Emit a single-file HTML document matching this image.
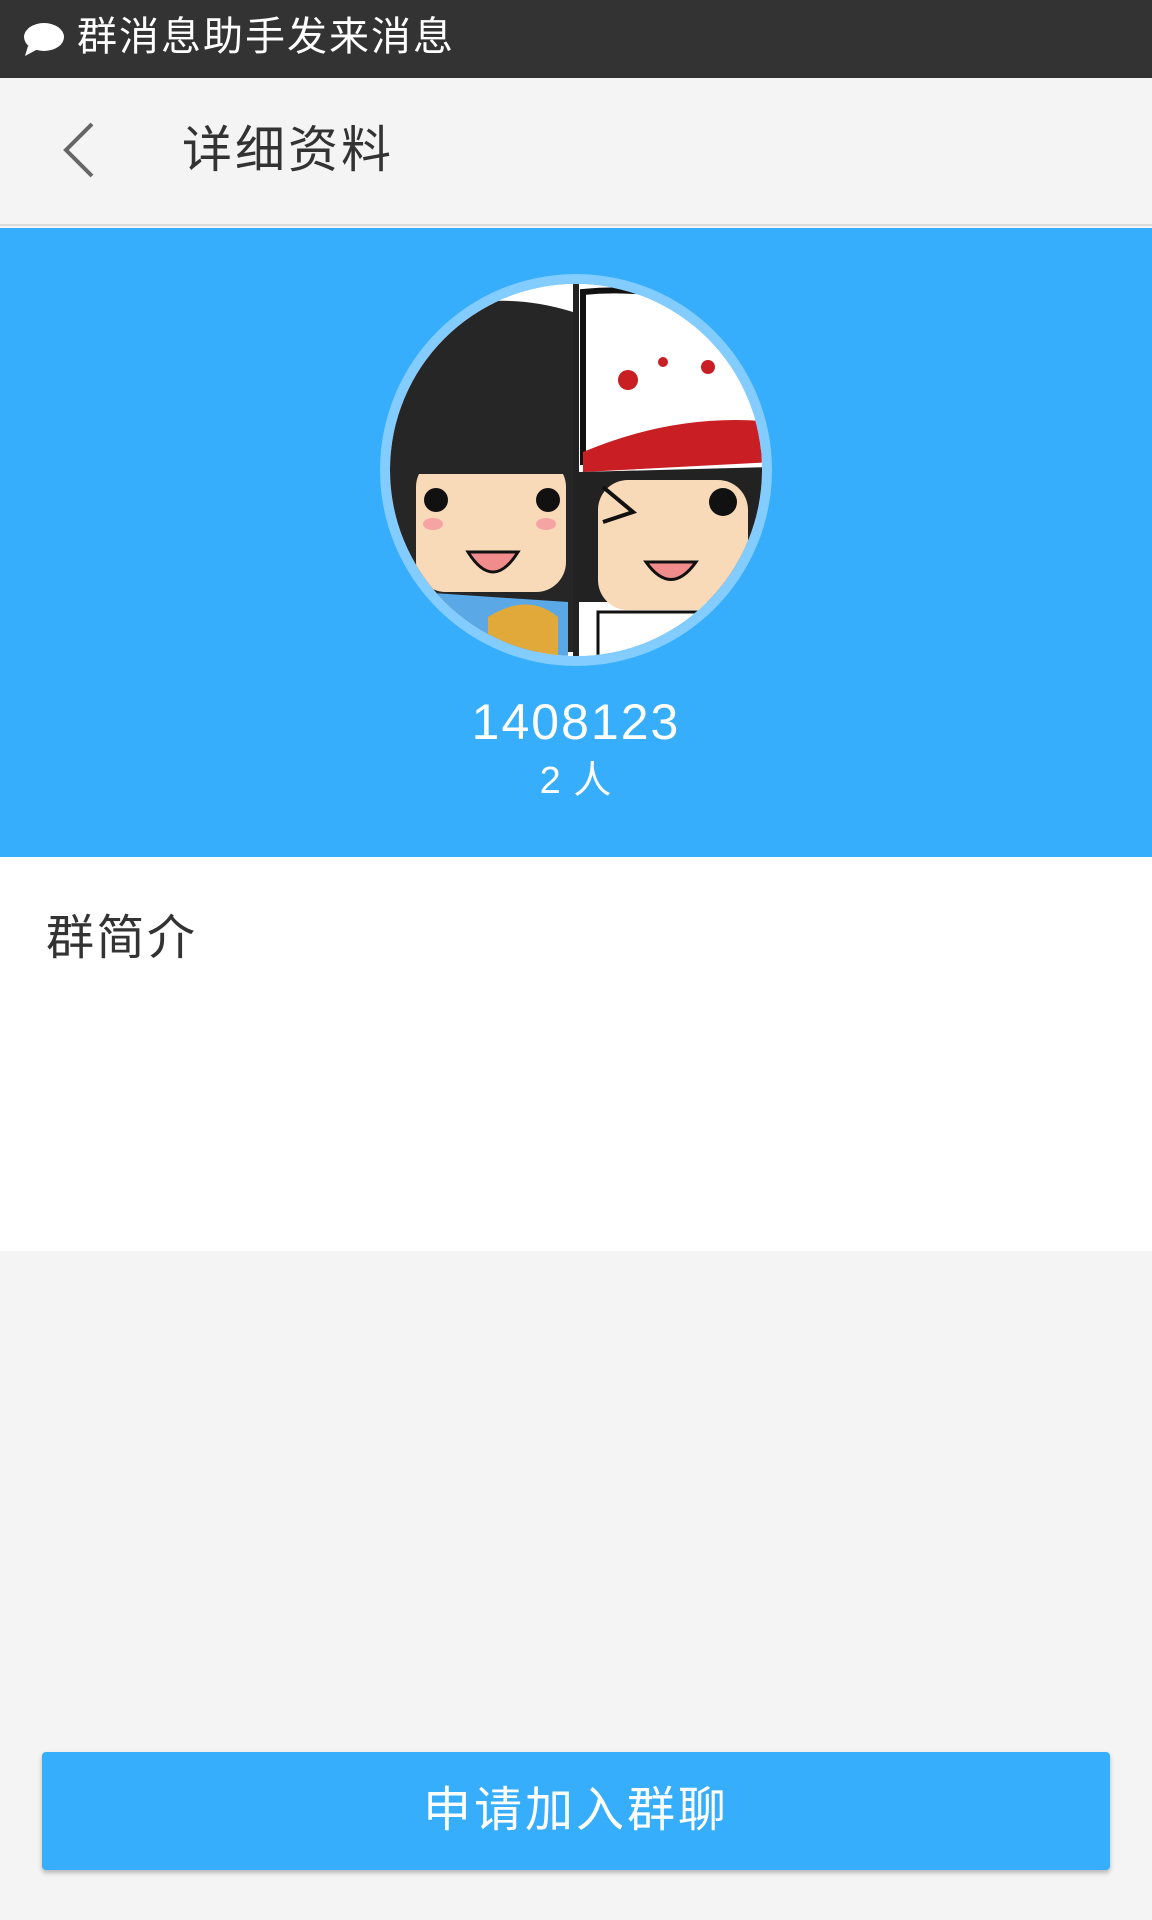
<!DOCTYPE html>
<html><head><meta charset="utf-8"><style>
*{margin:0;padding:0;box-sizing:border-box}
body{width:1152px;height:1920px;background:#f4f4f4;font-family:"Liberation Sans","Noto Sans CJK SC",sans-serif;position:relative;overflow:hidden}
.abs{position:absolute}
</style></head><body>
<div class="abs" style="left:0;top:0;width:1152px;height:78px;background:#333"></div>
<svg class="abs" style="left:22px;top:20px" width="44" height="38" viewBox="0 0 44 38"><ellipse cx="22" cy="17" rx="20" ry="14" fill="#fff"/><path d="M6 26 L3 36 L16 29Z" fill="#fff"/></svg>
<div class="abs" style="left:77px;top:12px;font-size:40px;color:#fff;line-height:50px;letter-spacing:2px">群消息助手发来消息</div>
<div class="abs" style="left:0;top:78px;width:1152px;height:148px;background:#f4f4f4;border-bottom:2px solid #ddd"></div>
<svg class="abs" style="left:60px;top:120px" width="40" height="60" viewBox="0 0 40 60"><path d="M32 4 L6 30 L32 56" stroke="#666" stroke-width="4" fill="none"/></svg>
<div class="abs" style="left:182px;top:120px;font-size:50px;color:#333;line-height:60px;letter-spacing:3px">详细资料</div>
<div class="abs" style="left:0;top:228px;width:1152px;height:629px;background:#36aefc"></div>
<svg class="abs" style="left:378px;top:272px" width="396" height="396" viewBox="0 0 396 396">
<defs><clipPath id="c"><circle cx="198" cy="198" r="186"/></clipPath></defs>
<circle cx="198" cy="198" r="196" fill="#82ccff"/>
<circle cx="198" cy="198" r="186" fill="#fff"/>
<g clip-path="url(#c)">
<rect x="0" y="0" width="195" height="396" fill="#fff"/>
<path d="M10 60 Q100 10 195 40 L195 380 L10 380Z" fill="#262626"/>
<rect x="38" y="185" width="150" height="135" rx="30" fill="#f8d9b8"/>
<rect x="38" y="182" width="150" height="20" fill="#262626"/>
<circle cx="58" cy="228" r="12" fill="#111"/><circle cx="170" cy="228" r="12" fill="#111"/>
<ellipse cx="55" cy="252" rx="10" ry="6" fill="#f5a3a3"/><ellipse cx="168" cy="252" rx="10" ry="6" fill="#f5a3a3"/>
<path d="M90 280 Q115 320 140 280Z" fill="#f08c8c" stroke="#111" stroke-width="3"/>
<path d="M40 320 L190 330 L190 396 L40 396Z" fill="#5aa9e6"/>
<path d="M110 345 Q150 320 180 345 L180 396 L110 396Z" fill="#e0a93a"/>
<rect x="195" y="0" width="6" height="396" fill="#222"/>
<rect x="201" y="0" width="195" height="396" fill="#fff"/>
<path d="M205 20 Q300 10 396 60 L396 180 L205 190Z" fill="#fff" stroke="#111" stroke-width="6"/>
<path d="M205 180 Q300 140 396 150 L396 190 L205 200Z" fill="#c81e24"/>
<circle cx="250" cy="108" r="10" fill="#c81e24"/><circle cx="285" cy="90" r="5" fill="#c81e24"/><circle cx="330" cy="95" r="7" fill="#c81e24"/>
<path d="M201 200 L396 195 L396 330 L201 330Z" fill="#222"/>
<rect x="220" y="208" width="150" height="130" rx="30" fill="#f8d9b8"/>
<circle cx="345" cy="230" r="14" fill="#111"/>
<path d="M225 215 L255 240 L225 250" stroke="#111" stroke-width="4" fill="none"/>
<path d="M268 290 Q293 325 318 290Z" fill="#f08c8c" stroke="#111" stroke-width="3"/>
<path d="M220 340 L370 340 L370 396 L220 396Z" fill="#fff" stroke="#111" stroke-width="3"/>
</g></svg>
<div class="abs" style="left:0;top:692px;width:1152px;text-align:center;font-size:50px;color:#fff;line-height:60px;letter-spacing:2px">1408123</div>
<div class="abs" style="left:0;top:757px;width:1152px;text-align:center;font-size:38px;color:#fff;line-height:48px;letter-spacing:1px">2 人</div>
<div class="abs" style="left:0;top:857px;width:1152px;height:394px;background:#fff"></div>
<div class="abs" style="left:46px;top:909px;font-size:48px;color:#333;line-height:60px;letter-spacing:2.5px">群简介</div>
<div class="abs" style="left:42px;top:1752px;width:1068px;height:118px;background:#36aefc;border-radius:4px;box-shadow:0 3px 5px rgba(0,0,0,0.25);text-align:center;font-size:48px;color:#fff;line-height:118px;letter-spacing:3px">申请加入群聊</div>
</body></html>
